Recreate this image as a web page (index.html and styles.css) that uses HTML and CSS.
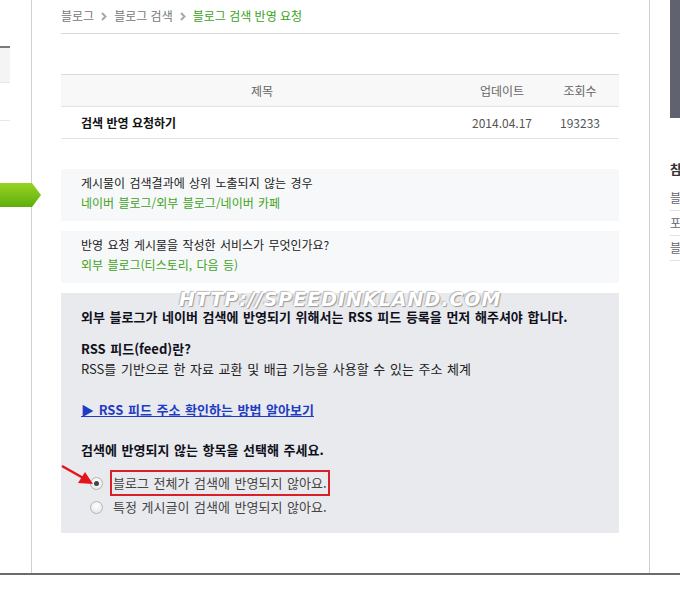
FILE: index.html
```html
<!DOCTYPE html>
<html lang="ko">
<head>
    <meta charset="UTF-8">
    <title>블로그 검색 반영 요청</title>
    <link rel="stylesheet" href="styles.css">
</head>
<body>
    <div class="page">
        <div class="left-nav">
            <div class="left-item active"></div>
            <div class="left-item"></div>
        </div>
        <div class="step-arrow"></div>

        <div class="content">
            <div class="breadcrumb">
                <span>블로그</span>
                <svg class="crumb-sep" width="6" height="9" viewBox="0 0 6 9"><path d="M1 1 L4.5 4.5 L1 8" fill="none" stroke="#a8a8a8" stroke-width="2"/></svg>
                <span>블로그 검색</span>
                <svg class="crumb-sep" width="6" height="9" viewBox="0 0 6 9"><path d="M1 1 L4.5 4.5 L1 8" fill="none" stroke="#a8a8a8" stroke-width="2"/></svg>
                <span class="current">블로그 검색 반영 요청</span>
            </div>

            <table class="post-table">
                <tr>
                    <th class="col-title">제목</th>
                    <th class="col-date">업데이트</th>
                    <th class="col-count">조회수</th>
                </tr>
                <tr>
                    <td class="col-title title">검색 반영 요청하기</td>
                    <td class="col-date">2014.04.17</td>
                    <td class="col-count">193233</td>
                </tr>
            </table>

            <div class="answer-box">
                <p>게시물이 검색결과에 상위 노출되지 않는 경우</p>
                <p class="answer">네이버 블로그/외부 블로그/네이버 카페</p>
            </div>

            <div class="answer-box">
                <p>반영 요청 게시물을 작성한 서비스가 무엇인가요?</p>
                <p class="answer">외부 블로그(티스토리, 다음 등)</p>
            </div>

            <div class="info-box">
                <div class="watermark">HTTP://SPEEDINKLAND.COM</div>
                <p class="strong">외부 블로그가 네이버 검색에 반영되기 위해서는 RSS 피드 등록을 먼저 해주셔야 합니다.</p>
                <p class="strong rss-title">RSS 피드(feed)란?</p>
                <p>RSS를 기반으로 한 자료 교환 및 배급 기능을 사용할 수 있는 주소 체계</p>
                <p class="rss-link"><a href="#">▶ RSS 피드 주소 확인하는 방법 알아보기</a></p>
                <p class="strong question">검색에 반영되지 않는 항목을 선택해 주세요.</p>
                <div class="choices">
                    <div class="choice">
                        <span class="radio checked"></span>
                        <span class="label marked">블로그 전체가 검색에 반영되지 않아요.</span>
                    </div>
                    <div class="choice">
                        <span class="radio"></span>
                        <span class="label">특정 게시글이 검색에 반영되지 않아요.</span>
                    </div>
                </div>
                <svg class="red-arrow" width="36" height="24" viewBox="0 0 36 24">
                    <line x1="1" y1="2" x2="24" y2="15" stroke="#e3141b" stroke-width="2.5"/>
                    <polygon points="32,20 17,19 24,8" fill="#e3141b"/>
                </svg>
            </div>
        </div>

        <div class="right-nav">
            <div class="right-top"></div>
            <div class="right-title">참고하세요</div>
            <ul class="right-list">
                <li>블로그 검색</li>
                <li>포스트 검색</li>
                <li>블로그 도움말</li>
            </ul>
        </div>
    </div>
</body>
</html>
```

FILE: styles.css
```css
body {
    margin: 0;
    font-family: "Noto Sans CJK KR", "DejaVu Sans", sans-serif;
    font-size: 12px;
    color: #222;
    background: #fff;
}
p {
    margin: 0;
}
.page {
    display: flex;
    height: 573px;
    border-bottom: 2px solid #6b6b6b;
    position: relative;
    overflow: hidden;
}

/* left column */
.left-nav {
    width: 31px;
    flex-shrink: 0;
    border-right: 1px solid #d0d0d0;
    padding-top: 46px;
}
.left-item {
    width: 10px;
    height: 37px;
    border-bottom: 1px solid #e8e8e8;
}
.left-item.active {
    height: 34px;
    border-top: 2px solid #7a7a7a;
    background: #f4f4f4;
}
.step-arrow {
    position: absolute;
    left: 0;
    top: 183px;
    width: 41px;
    height: 24px;
    background: linear-gradient(#96d424, #5fae0c);
    clip-path: polygon(0 0, 32px 0, 41px 12px, 32px 24px, 0 24px);
}

/* main content */
.content {
    width: 558px;
    padding: 0 30px 0 29px;
    border-right: 1px solid #d0d0d0;
    flex-shrink: 0;
}
.breadcrumb {
    display: flex;
    align-items: center;
    gap: 7px;
    padding: 9px 0 10px;
    line-height: 14px;
    color: #777;
    border-bottom: 1px solid #d8d8d8;
}
.breadcrumb .current {
    color: #36a318;
}
.post-table {
    width: 100%;
    margin-top: 40px;
    border-collapse: collapse;
}
.post-table th,
.post-table td {
    height: 31px;
    padding: 0;
    text-align: center;
    border-bottom: 1px solid #e3e3e3;
}
.post-table th {
    font-weight: normal;
    color: #666;
    background: #f8f8f8;
    border-top: 1px solid #dcdcdc;
}
.post-table td {
    color: #555;
}
.post-table .col-date {
    width: 78px;
}
.post-table .col-count {
    width: 78px;
}
.post-table td.title {
    text-align: left;
    padding-left: 20px;
    font-weight: bold;
    color: #111;
}
.answer-box {
    margin-top: 10px;
    height: 52px;
    box-sizing: border-box;
    padding: 4px 20px 0;
    background: #f7f8f9;
    line-height: 20px;
    word-spacing: 1px;
}
.post-table + .answer-box {
    margin-top: 30px;
}
.answer-box .answer {
    color: #40a31c;
}
.info-box {
    position: relative;
    margin-top: 10px;
    height: 240px;
    box-sizing: border-box;
    padding: 14px 20px 0;
    background: #e9eaee;
    font-size: 13px;
    word-spacing: 1px;
    line-height: 20px;
}
.info-box .strong {
    font-weight: bold;
    color: #10101c;
}
.info-box .rss-title {
    margin-top: 12px;
}
.rss-link {
    margin-top: 21px;
}
.rss-link a {
    color: #1f3cc4;
    font-weight: bold;
    text-decoration: underline;
}
.info-box .question {
    margin-top: 20px;
}
.choices {
    margin-top: 11px;
    padding-left: 9px;
}
.choice {
    display: flex;
    align-items: center;
    height: 24px;
    gap: 10px;
    color: #444;
}
.radio {
    width: 11px;
    height: 11px;
    border: 1px solid #b5b5b5;
    border-radius: 50%;
    background: radial-gradient(circle at 50% 35%, #fff, #e2e2e2);
    position: relative;
}
.radio.checked::after {
    content: "";
    position: absolute;
    left: 3px;
    top: 3px;
    width: 5px;
    height: 5px;
    border-radius: 50%;
    background: #444;
}
.label.marked {
    outline: 2px solid #d8202a;
    outline-offset: 1px;
}
.red-arrow {
    position: absolute;
    left: 0;
    top: 171px;
}
.watermark {
    position: absolute;
    left: 118px;
    top: -6px;
    font-family: "DejaVu Sans", sans-serif;
    font-size: 19px;
    font-weight: bold;
    font-style: italic;
    letter-spacing: 1px;
    word-spacing: 0;
    color: #fff;
    line-height: 24px;
    text-shadow: 1px 1px 1px #999, -1px -1px 1px #bbb;
}

/* right column */
.right-nav {
    flex: 1;
    padding-left: 20px;
    overflow: hidden;
    white-space: nowrap;
}
.right-top {
    height: 118px;
    background: #60626f;
}
.right-title {
    margin-top: 41px;
    font-size: 13px;
    font-weight: bold;
    color: #333;
}
.right-list {
    list-style: none;
    margin: 8px 0 0;
    padding: 0;
}
.right-list li {
    height: 24px;
    line-height: 24px;
    color: #666;
    border-bottom: 1px solid #e3e3e3;
}
```
